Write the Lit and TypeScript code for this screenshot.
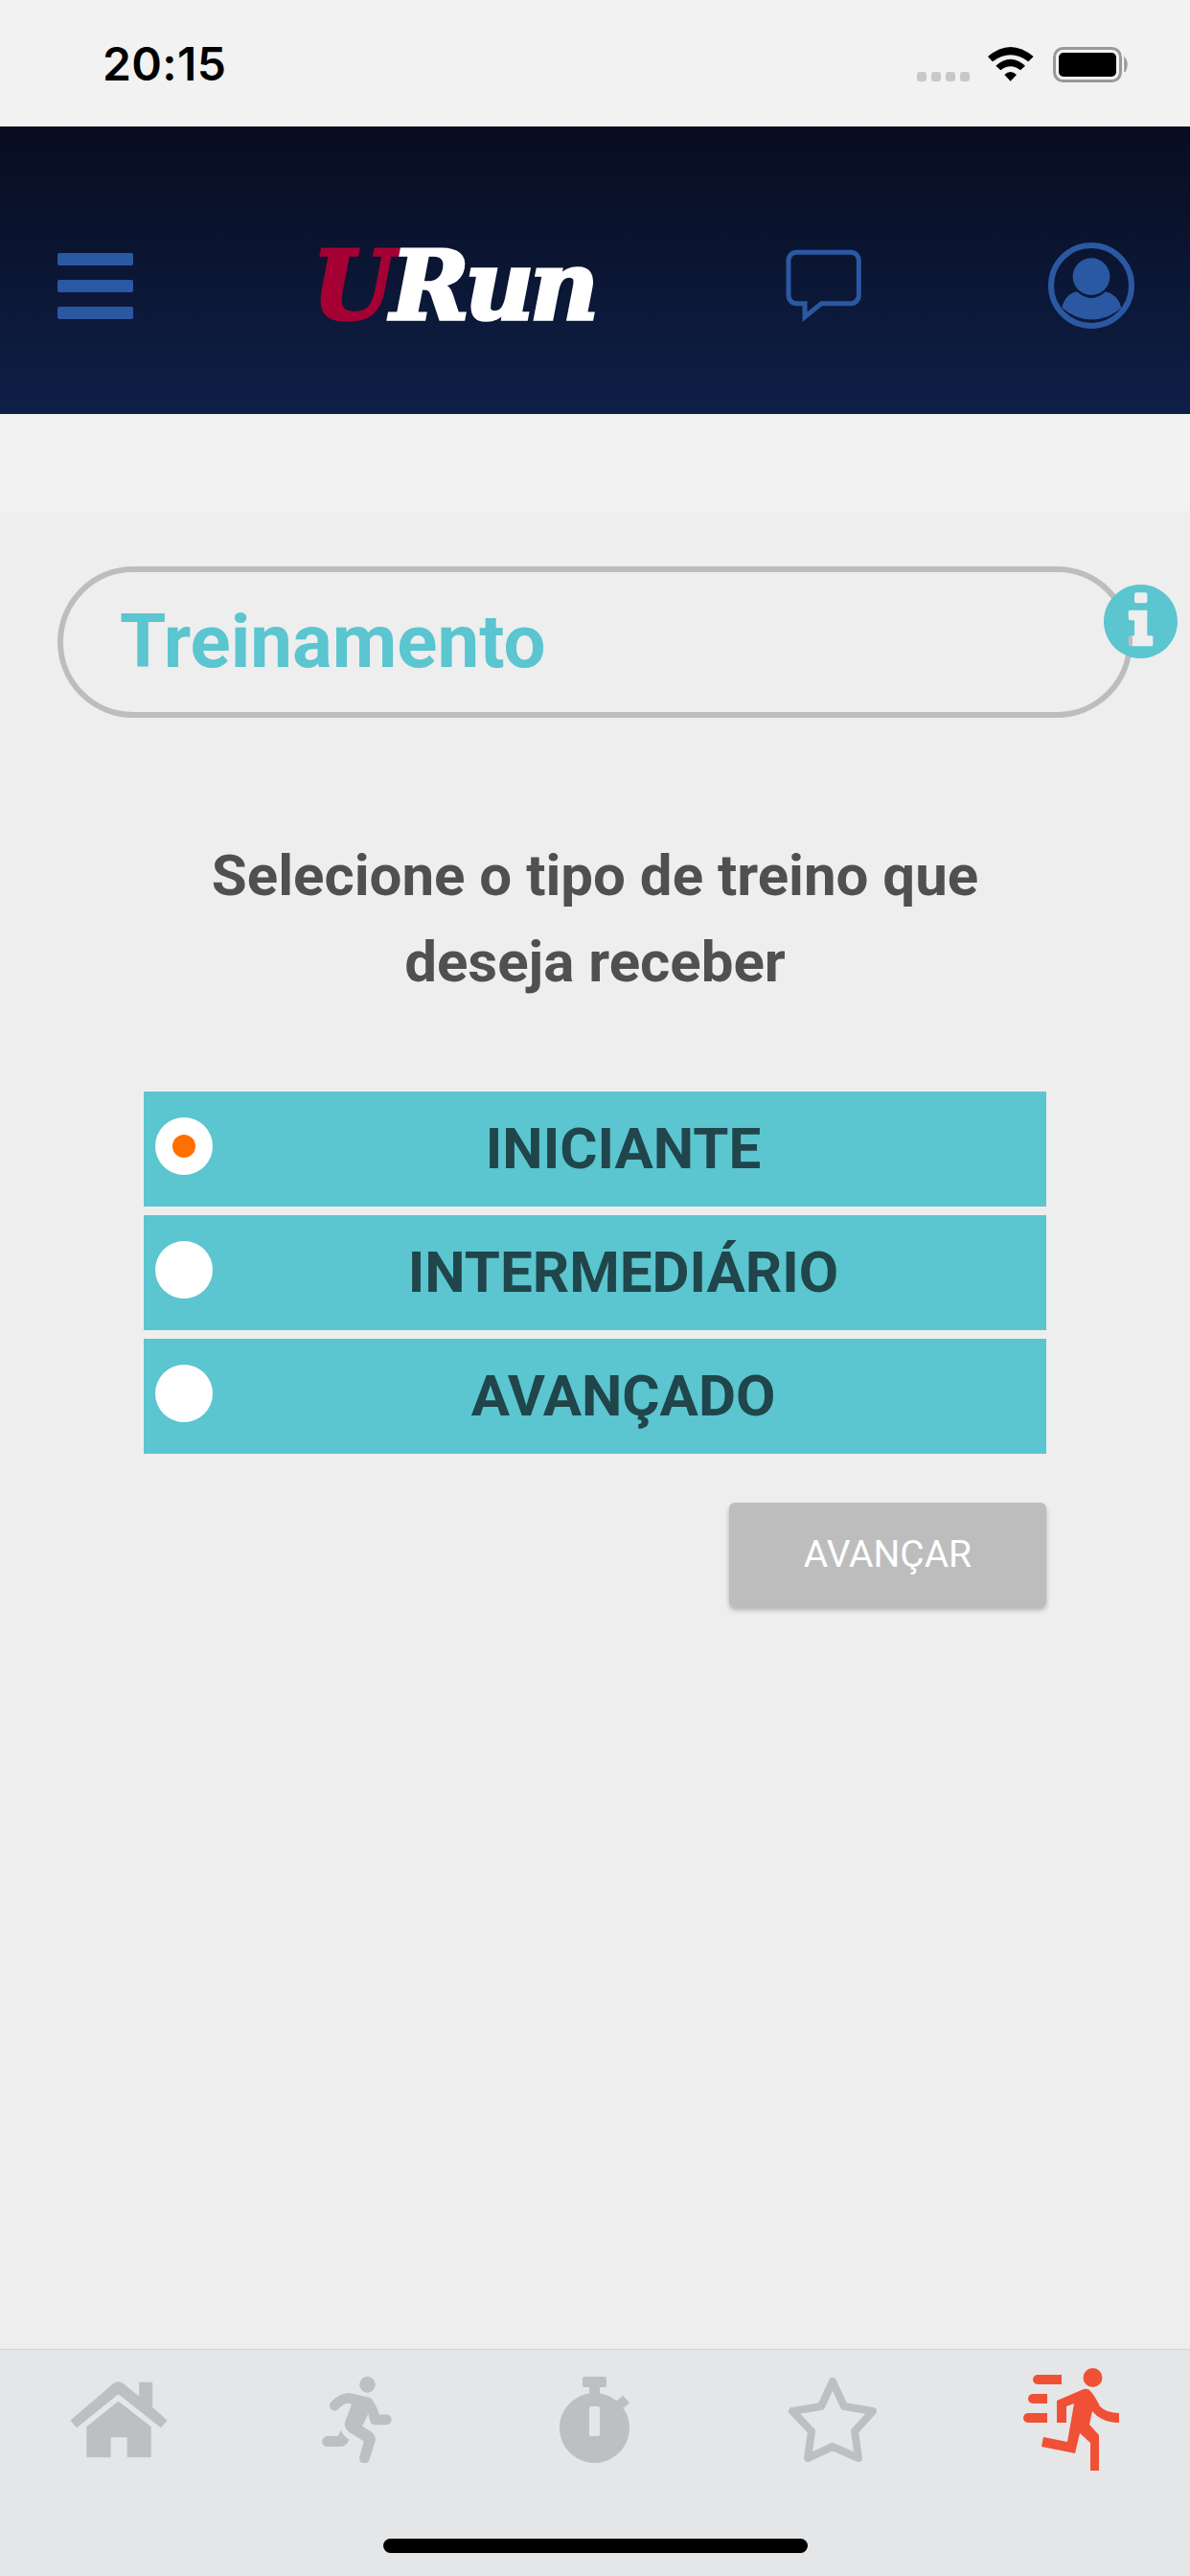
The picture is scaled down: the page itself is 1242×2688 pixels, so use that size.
import { LitElement, html, css, svg } from "lit";
import { customElement } from "lit/decorators.js";

const BLUE = "#2b58a2";
const GREY = "#bebfc1";

@customElement("app-root")
export class AppRoot extends LitElement {
  static styles = css`
    :host { display: flex; flex-direction: column; width: 1242px; height: 2688px; background: #eeeeee; font-family: Roboto, "Noto Sans", sans-serif; overflow: hidden; }
    svg { display: block; flex: none; }
    .status { height: 132px; flex: none; background: #f2f2f2; display: flex; align-items: flex-start; box-sizing: border-box; padding: 38px 60px 0 107px; }
    .time { line-height: 58px; font-weight: 600; color: #000; width: 850px; letter-spacing: 0.4px; font-family: Inter, Roboto, sans-serif; font-size: 48px; }
    .dots { display: flex; gap: 5px; margin: 37px 0 0 0; }
    .dots i { display: block; width: 10px; height: 10px; border-radius: 3px; background: #c8c8c8; }
    .wifi { margin: 11px 0 0 19px; }
    .batt { margin: 11px 0 0 20px; }
    .header { height: 300px; flex: none; box-sizing: border-box; background: linear-gradient(180deg, #080d20 0%, #0e1f47 100%); display: flex; align-items: center; padding: 32px 0 0 60px; }
    .burger { width: 79px; display: flex; flex-direction: column; gap: 15px; }
    .burger i { display: block; height: 13px; border-radius: 2px; background: #2b58a2; }
    .logo { margin-left: 187px; width: 297px; height: 75px; color: #fff; font-family: "DejaVu Serif", serif; font-weight: 700; font-style: italic; font-size: 99px; line-height: 75px; white-space: nowrap; letter-spacing: -4.5px; -webkit-text-stroke: 3.500px currentColor; }
    .logo span { color: #a50034; }
    .chat { margin-left: 197px; margin-top: 2px; }
    .avatar { margin-left: 194px; }
    .gap { height: 102px; flex: none; background: #f2f2f2; }
    .main { flex: 1; display: flex; flex-direction: column; background: #eeeeee; min-height: 0; }
    .pill { position: relative; margin: 57px 60px 0; height: 158px; box-sizing: border-box; border: 6px solid #bdbdbd; border-radius: 79px; display: flex; align-items: center; padding-left: 59px; }
    .pill h1 { margin: 0; font-size: 78px; font-weight: 700; color: #5bc5d0; line-height: 1; }
    .info { position: absolute; right: -53px; top: 13px; }
    .question { margin: 120px 0 0; text-align: center; font-size: 60px; line-height: 90px; font-weight: 700; color: #505050; }
    .options { display: flex; flex-direction: column; gap: 9px; margin: 90px 150px 0; }
    .opt { height: 120px; background: #5bc5d0; display: flex; padding: 0 13px 0 12px; }
    .radio { width: 60px; height: 60px; margin-top: 27px; border-radius: 50%; background: #fff; display: flex; align-items: center; justify-content: center; flex: none; }
    .radio i { display: block; width: 24px; height: 24px; border-radius: 50%; background: #ff7000; }
    .label { flex: 1; text-align: center; font-size: 60px; line-height: 120px; font-weight: 700; color: #20454a; }
    .actions { display: flex; justify-content: flex-end; margin: 51px 150px 0; }
    .btn { width: 331px; height: 109px; box-sizing: border-box; padding-bottom: 2px; border-radius: 6px; background: #bdbdbd; color: #fff; font-size: 39px; display: flex; align-items: center; justify-content: center; box-shadow: 0 3px 5px rgba(0,0,0,.25); }
    .tabbar { flex: none; height: 237px; box-sizing: border-box; background: #e5e6e8; border-top: 1px solid #d3d4d6; display: flex; flex-direction: column; align-items: center; }
    .tabs { display: grid; grid-template-columns: repeat(5, 1fr); width: 1242px; height: 145px; flex: none; }
    .tab { display: flex; align-items: center; justify-content: center; }
    .home-ind { margin-top: 52px; width: 443px; height: 15px; border-radius: 8px; background: #000; }
  `;

  private wifi() {
    return svg`<svg class="wifi" width="48" height="36" viewBox="95 88 144 108" fill="#000">
      <path d="M95 118 Q166 58 238 118 L222 134 Q166 92 110 134Z"/>
      <path d="M120 147 Q166 105 212 147 L197 161 Q166 136 135 161Z"/>
      <path d="M147 175 Q166 157 185 175 L166 195Z"/></svg>`;
  }

  private battery() {
    return svg`<svg class="batt" width="80" height="37" viewBox="0 0 80 37">
      <rect x="1.5" y="1.5" width="69" height="34" rx="9" fill="none" stroke="#999" stroke-width="3"/>
      <rect x="6" y="6" width="60" height="25" rx="5" fill="#000"/>
      <path d="M75 12 Q79 18 75 26Z" fill="#999" stroke="#999" stroke-width="1.5"/></svg>`;
  }

  private chat() {
    return svg`<svg class="chat" width="80" height="78" viewBox="118 90 240 234">
      <path d="M152 100 H322 A25 25 0 0 1 347 125 V235 A25 25 0 0 1 322 260 H230 L178 302 V260 H152 A25 25 0 0 1 127 235 V125 A25 25 0 0 1 152 100Z" fill="none" stroke="${BLUE}" stroke-width="15"/></svg>`;
  }

  private avatar() {
    return svg`<svg class="avatar" width="90" height="90" viewBox="935 68 270 270">
      <circle cx="1070" cy="203" r="126" fill="none" stroke="${BLUE}" stroke-width="18"/>
      <circle cx="1070" cy="175" r="58" fill="${BLUE}"/>
      <path d="M978 272 Q988 230 1025 222 Q1070 262 1115 222 Q1152 230 1164 272 A135 135 0 0 1 978 272Z" fill="${BLUE}"/></svg>`;
  }

  private info() {
    return svg`<svg class="info" width="77" height="77" viewBox="276 150 231 231">
      <path fill="#5bc5d0" fill-rule="evenodd" d="M391.500 150 A115.500 115.500 0 1 1 391.400 150Z
        M378 175 H406 Q412 175 412 181 V202 Q412 208 406 208 H378 Q372 208 372 202 V181 Q372 175 378 175Z
        M358 230 H412 V310 H425 Q430 310 430 315 V338 Q430 343 425 343 H358 Q353 343 353 338 V315 Q353 310 358 310 H372 V262 H358 Q353 262 353 257 V235 Q353 230 358 230Z"/></svg>`;
  }

  private homeIcon() {
    return svg`<svg width="102" height="80" viewBox="100 133 303 240" fill="${GREY}">
      <path stroke="${GREY}" stroke-width="6" stroke-linejoin="round" d="M104 255 L236 142 Q250 132 264 142 L318 186 V138 H354 V215 L399 255 L383 274 L250 169 L120 274Z"/>
      <path stroke="${GREY}" stroke-width="5" stroke-linejoin="round" d="M250 198 L350 276 V368 H280 V305 H224 V368 H153 V276Z"/></svg>`;
  }

  private runnerIcon() {
    return svg`<svg width="73" height="90" viewBox="885 117 220 271" fill="${GREY}">
      <circle cx="1028" cy="142" r="25"/>
      <path d="M925 208 Q945 186 968 184 L1030 198 Q1045 218 1052 252 H1088" fill="none" stroke="${GREY}" stroke-width="32" stroke-linecap="round" stroke-linejoin="round"/>
      <path d="M975 180 L1035 195 L1030 235 L1012 272 L1042 292 Q1058 305 1052 322 L1034 378 A16 16 0 0 1 1003 370 L1017 320 L975 294 Q952 280 958 258 L978 205Z"/>
      <path d="M902 304 H935 L945 286 Q950 302 970 314 Q964 337 940 337 H902 A16.500 16.500 0 0 1 902 304Z"/></svg>`;
  }

  private watchIcon() {
    return svg`<svg width="73" height="90" viewBox="0 0 73 90" fill="${GREY}">
      <rect x="24" y="0" width="25" height="11" rx="2"/>
      <rect x="31" y="10" width="11" height="12"/>
      <path d="M59 26 L66 19.500 L73 27 L67 33Z"/>
      <path fill-rule="evenodd" d="M36.500 17 A36.500 36.500 0 1 1 36.400 17Z M33 31 H40 Q42 31 42 33 V60 Q42 62 40 62 H33 Q31 62 31 60 V33 Q31 31 33 31Z"/></svg>`;
  }

  private starIcon() {
    return svg`<svg width="95" height="90" viewBox="0 0 95 90">
      <path d="M47 5 L59 31 L89 36 L70 57 L74 85 L47 73 L21 85 L25 57 L5 36 L35 31Z" fill="none" stroke="${GREY}" stroke-width="8" stroke-linejoin="round"/></svg>`;
  }

  private runIcon() {
    return svg`<svg width="100" height="107" viewBox="0 0 100 107" fill="#f05136">
      <circle cx="72.500" cy="10" r="10"/>
      <path d="M15 7 H40 V17 H15 A5 5 0 0 1 15 7Z"/>
      <path d="M10 27 H25 V37 H10 A5 5 0 0 1 10 27Z"/>
      <path d="M5 47 H25 V57 H5 A5 5 0 0 1 5 47Z"/>
      <path d="M35 34 L63 22 Q68 21 70 24 Q74 28 80 40 Q87 47 100 47 V57 Q89 57 82 53 Q76 50 72 45 L69 59 L79 70 V107 H70 V78 L59 68 L54 89 L19 82 L21 72 L46 77 L53 37 L45 40 V57 H35Z"/></svg>`;
  }

  render() {
    return html`
      <div class="status">
        <div class="time">20:15</div>
        <div class="dots"><i></i><i></i><i></i><i></i></div>
        ${this.wifi()}${this.battery()}
      </div>
      <div class="header">
        <div class="burger"><i></i><i></i><i></i></div>
        <div class="logo"><span>U</span>Run</div>
        ${this.chat()}${this.avatar()}
      </div>
      <div class="gap"></div>
      <div class="main">
        <div class="pill"><h1>Treinamento</h1>${this.info()}</div>
        <p class="question">Selecione o tipo de treino que<br />deseja receber</p>
        <div class="options">
          <div class="opt"><div class="radio"><i></i></div><div class="label">INICIANTE</div></div>
          <div class="opt"><div class="radio"></div><div class="label">INTERMEDIÁRIO</div></div>
          <div class="opt"><div class="radio"></div><div class="label">AVANÇADO</div></div>
        </div>
        <div class="actions"><div class="btn">AVANÇAR</div></div>
      </div>
      <div class="tabbar">
        <div class="tabs">
          <div class="tab">${this.homeIcon()}</div>
          <div class="tab">${this.runnerIcon()}</div>
          <div class="tab">${this.watchIcon()}</div>
          <div class="tab">${this.starIcon()}</div>
          <div class="tab">${this.runIcon()}</div>
        </div>
        <div class="home-ind"></div>
      </div>
    `;
  }
}
